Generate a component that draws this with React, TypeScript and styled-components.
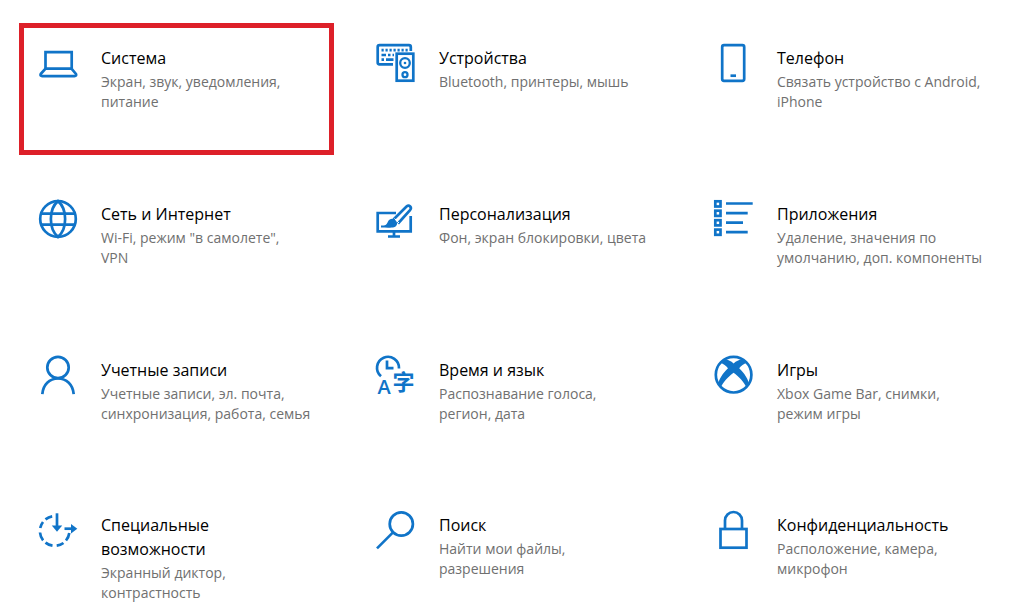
import React from "react";
import styled, { createGlobalStyle } from "styled-components";

const GlobalStyle = createGlobalStyle`
  *, *::before, *::after { box-sizing: border-box; }
  body {
    margin: 0;
    background: #ffffff;
    font-family: "Open Sans", "Noto Sans", sans-serif;
  }
`;

const Page = styled.main`
  padding: 23px 0 0 19px;
`;

const Grid = styled.nav`
  display: grid;
  grid-template-columns: repeat(3, minmax(0, 1fr));
  grid-template-rows: 132px 132px 131px auto;
  gap: 24px 23px;
`;

const Tile = styled.a<{ $highlighted?: boolean }>`
  display: flex;
  align-items: flex-start;
  gap: 23px;
  padding: 15px 14px 0;
  border: 5px solid ${(p) => (p.$highlighted ? "#dd2029" : "transparent")};
  color: inherit;
  text-decoration: none;
`;

const Icon = styled.svg`
  flex: none;
  width: 40px;
  height: 40px;
  fill: none;
  stroke: #1074c8;
  stroke-width: 2.7;
  overflow: visible;
`;

const Glyph = styled.text<{ $size: number; $weight: number }>`
  fill: #1074c8;
  stroke: none;
  font-family: "Open Sans", "Noto Sans CJK SC", sans-serif;
  font-size: ${(p) => p.$size}px;
  font-weight: ${(p) => p.$weight};
`;

const Copy = styled.span`
  display: flex;
  flex-direction: column;
  gap: 2px;
  max-width: 212px;
  padding-top: 3px;
`;

const Title = styled.span`
  font-size: 16px;
  line-height: 24px;
  color: #000000;
`;

const Description = styled.span`
  font-size: 14px;
  line-height: 20px;
  color: #707070;
  white-space: pre-line;
`;

const solid = { fill: "#1074c8", stroke: "none" };

const icons = {
  system: (
    <>
      <path d="M7.5 25.5V9.2H33.7V25.5" />
      <path d="M7.5 25.7H33.5L38 31Q38.8 33.1 36.5 33.1H4.2Q1.8 33.1 2.7 31Z" strokeLinejoin="round" />
    </>
  ),
  devices: (
    <>
      <path d="M17 21.3H3.5Q1.7 21.3 1.7 19.5V4Q1.7 2.2 3.5 2.2H33Q34.8 2.2 34.8 4V8" />
      <path d="M5.5 7.2H32" strokeDasharray="2.2 1.8" />
      <path d="M5.5 12H10M12 12H14.5M16.5 12H18" />
      <path d="M5.5 16.7H8M10 16.7H17.5" />
      <rect x="20.7" y="10.7" width="16.6" height="27" />
      <circle cx="29" cy="20" r="4.8" strokeWidth="2.3" />
      <circle cx="29" cy="20" r="1.3" {...solid} />
      <circle cx="29" cy="31.7" r="2.5" strokeWidth="2.3" />
    </>
  ),
  phone: (
    <>
      <rect x="8.2" y="2.2" width="22" height="35.6" rx="1.8" />
      <path d="M16.5 32.7H22" />
    </>
  ),
  network: (
    <>
      <circle cx="20" cy="20" r="17.8" />
      <path d="M20 2.1C10.5 10 10.5 30 20 37.9C29.5 30 29.5 10 20 2.1Z" />
      <path d="M3 14.6H37M3 25.6H37" />
    </>
  ),
  personalization: (
    <>
      <path d="M20 14H1.7V32.3H34.7V17" />
      <path d="M18 32V37.5M12 37.5H24" />
      <path d="M17.5 20.5L30.5 7.5Q32.5 5.8 34.2 7.5Q35.7 9.2 34 11.2L22 24.5" />
      <path d="M5 28.6V26.5C10 27 10.5 25.5 12 22.5C13.5 19.5 17 19 19.5 21.2C22 23.5 21.5 27 18 28.2C16 28.8 12 28.6 5 28.6Z" {...solid} />
      <path d="M18.5 19.5L23 24" stroke="#ffffff" strokeWidth="1" />
    </>
  ),
  apps: (
    <>
      <rect x="1.3" y="2.3" width="5.2" height="5.2" />
      <rect x="1.3" y="11.7" width="5.2" height="5.2" />
      <rect x="1.3" y="21.2" width="5.2" height="5.2" />
      <rect x="1.3" y="30.6" width="5.2" height="5.2" />
      <path d="M12 4.5H38.7M12 14.1H33.7M12 23.6H29M12 33.1H33.7" />
    </>
  ),
  accounts: (
    <>
      <circle cx="20" cy="12.5" r="10.7" />
      <path d="M4.3 39.2C5 29.5 11.5 23.5 20 23.5S35 29.5 35.7 39.2" />
    </>
  ),
  time: (
    <>
      <path d="M5 21.3A11 11 0 1 1 23 13.5" />
      <path d="M11 5.5V13.2H17.5" />
      <Glyph x="1.5" y="39" $size={20} $weight={600}>A</Glyph>
      <Glyph x="16.5" y="34.5" $size={22} $weight={700}>字</Glyph>
    </>
  ),
  games: (
    <>
      <circle cx="19.6" cy="19.7" r="17.8" />
      <path
        d="M8 5.5C12 3.2 16 5.6 19.6 8.4C23.2 5.6 27.2 3.2 31.2 5.5L32.5 8C30 8.8 27 11 25.2 13.3C30.5 18.5 34.5 24.5 35 29.5L32.5 32.5C30 27 25 21.8 19.6 17.8C14.2 21.8 9.2 27 6.700 32.5L4.200 29.5C4.700 24.5 8.700 18.5 14 13.3C12.200 11 9.200 8.800 6.700 8Z"
        {...solid}
      />
    </>
  ),
  accessibility: (
    <>
      <path d="M14.2 6.4A14.8 14.8 0 0 0 7.5 9.4M5 12A14.8 14.8 0 0 0 2.2 18M2 22.5A14.8 14.8 0 0 0 5.1 30.4M7.5 32.6A14.8 14.8 0 0 0 14.5 35.7M18.7 35.7A14.8 14.8 0 0 0 25.5 33M28 30.5A14.8 14.8 0 0 0 31.3 23" />
      <path d="M19 3.3V18" />
      <path d="M13.8 15.5H24.2L19 21.8Z" {...solid} />
      <path d="M26.5 18.7H35" />
      <path d="M33 13.9L39.3 18.7L33 23.5Z" {...solid} />
    </>
  ),
  search: (
    <>
      <circle cx="25.3" cy="14" r="11.6" />
      <path d="M17 22.4L1 38.4" />
    </>
  ),
  privacy: (
    <>
      <rect x="6.5" y="19" width="26" height="18.7" />
      <path d="M11 19V10.5A8.5 8.5 0 0 1 28 10.5V19" />
    </>
  ),
};

interface Category {
  icon: keyof typeof icons;
  title: string;
  description: string;
  highlighted?: boolean;
}

const categories: Category[] = [
  { icon: "system", title: "Система", description: "Экран, звук, уведомления, питание", highlighted: true },
  { icon: "devices", title: "Устройства", description: "Bluetooth, принтеры, мышь" },
  { icon: "phone", title: "Телефон", description: "Связать устройство с Android, iPhone" },
  { icon: "network", title: "Сеть и Интернет", description: "Wi-Fi, режим \"в самолете\",\nVPN" },
  { icon: "personalization", title: "Персонализация", description: "Фон, экран блокировки, цвета" },
  { icon: "apps", title: "Приложения", description: "Удаление, значения по умолчанию, доп. компоненты" },
  { icon: "accounts", title: "Учетные записи", description: "Учетные записи, эл. почта, синхронизация, работа, семья" },
  { icon: "time", title: "Время и язык", description: "Распознавание голоса, регион, дата" },
  { icon: "games", title: "Игры", description: "Xbox Game Bar, снимки, режим игры" },
  { icon: "accessibility", title: "Специальные возможности", description: "Экранный диктор, контрастность" },
  { icon: "search", title: "Поиск", description: "Найти мои файлы, разрешения" },
  { icon: "privacy", title: "Конфиденциальность", description: "Расположение, камера, микрофон" },
];

export default function App() {
  return (
    <>
      <GlobalStyle />
      <Page>
        <Grid>
          {categories.map((c) => (
            <Tile key={c.icon} href={`#${c.icon}`} $highlighted={c.highlighted}>
              <Icon viewBox="0 0 40 40" aria-hidden="true">
                {icons[c.icon]}
              </Icon>
              <Copy>
                <Title>{c.title}</Title>
                <Description>{c.description}</Description>
              </Copy>
            </Tile>
          ))}
        </Grid>
      </Page>
    </>
  );
}
